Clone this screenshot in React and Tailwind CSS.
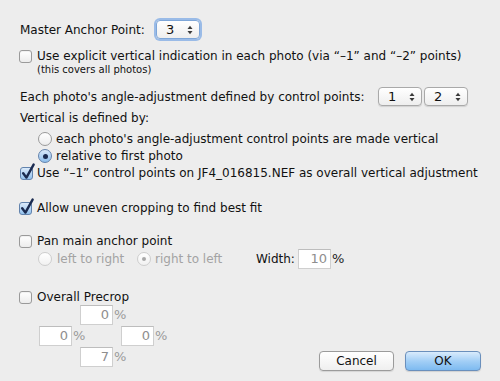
import React from "react";

function Arrows() {
  return (
    <svg width="6" height="10" viewBox="0 0 6 10" className="block">
      <path d="M0.5 4 L3 0.8 L5.5 4 Z" fill="#3a3a3a" />
      <path d="M0.5 6 L3 9.2 L5.5 6 Z" fill="#3a3a3a" />
    </svg>
  );
}

function Select({ value, focused }) {
  return (
    <div
      className={
        "w-[44px] h-[19px] rounded-[4px] flex items-center justify-between text-[13px] text-[#111] bg-linear-to-b from-white to-[#eeeeee] " +
        (focused
          ? "border border-[#7ea6d8] shadow-[0_0_0_2px_rgba(125,170,228,0.75)] pl-[9px] pr-[6px]"
          : "border border-[#a9a9a9] shadow-[0_1px_1px_rgba(0,0,0,0.12)] pl-[9px] pr-[6px]")
      }
    >
      <span className="leading-none">{value}</span>
      <Arrows />
    </div>
  );
}

function Checkbox({ checked }) {
  if (checked) {
    return (
      <span className="relative block w-[13px] h-[13px] shrink-0 rounded-[3px] border border-[#6283ad] bg-linear-to-b from-[#dbeafa] to-[#93c2ee]">
        <svg
          width="14"
          height="17"
          viewBox="0 0 14 17"
          className="absolute left-[0px] top-[-5px]"
        >
          <path
            d="M2.2 10.2 L5.4 14.6 L12.6 1.6"
            fill="none"
            stroke="#1b2b50"
            strokeWidth="2.4"
            strokeLinecap="round"
            strokeLinejoin="round"
          />
        </svg>
      </span>
    );
  }
  return (
    <span className="block w-[13px] h-[13px] shrink-0 rounded-[3px] border border-[#9a9a9a] bg-linear-to-b from-white to-[#ececec] shadow-[inset_0_1px_1px_rgba(0,0,0,0.06)]" />
  );
}

function Radio({ checked, disabled }) {
  if (disabled) {
    return (
      <span className="flex items-center justify-center w-[14px] h-[14px] shrink-0 rounded-full border border-[#cdcdcd] bg-linear-to-b from-white to-[#f1f1f1]">
        {checked && <span className="block w-[4px] h-[4px] rounded-full bg-[#a8a8a8]" />}
      </span>
    );
  }
  if (checked) {
    return (
      <span className="flex items-center justify-center w-[14px] h-[14px] shrink-0 rounded-full border border-[#6283ad] bg-linear-to-b from-[#dbeafa] to-[#8dbeec]">
        <span className="block w-[5px] h-[5px] rounded-full bg-[#1b2b50]" />
      </span>
    );
  }
  return (
    <span className="block w-[14px] h-[14px] shrink-0 rounded-full border border-[#9a9a9a] bg-linear-to-b from-white to-[#ececec]" />
  );
}

function Field({ value, pctClass }) {
  return (
    <span className="flex items-center">
      <span className="flex items-center justify-end w-[33px] h-[20px] bg-white border border-[#cfcfcf] border-t-[#bdbdbd] pr-[3px] text-[13px] text-[#8e8e8e]">
        {value}
      </span>
      <span className={"ml-[1px] text-[13px] " + pctClass}>%</span>
    </span>
  );
}

export default function App() {
  return (
    <div className="w-[500px] h-[381px] overflow-hidden bg-[#ededed] pl-[19px] pt-[20px] flex flex-col font-['DejaVu_Sans',sans-serif] text-[12px] text-[#111]">
      {/* Master Anchor Point */}
      <div className="flex items-center h-[19px]">
        <span className="ml-[1px] w-[136px]">Master Anchor Point:</span>
        <Select value="3" focused />
      </div>

      {/* explicit vertical */}
      <div className="flex items-center h-[14px] mt-[10px]">
        <Checkbox />
        <span className="ml-[5px]">
          Use explicit vertical indication in each photo (via “–1” and “–2” points)
        </span>
      </div>
      <div className="pl-[18px] h-[14px] leading-[14px] text-[10px]">
        (this covers all photos)
      </div>

      {/* angle adjustment */}
      <div className="flex items-center h-[19px] mt-[10px]">
        <span className="ml-[1px] w-[358px]">
          Each photo's angle-adjustment defined by control points:
        </span>
        <Select value="1" />
        <span className="ml-[2px]">
          <Select value="2" />
        </span>
      </div>

      <div className="flex items-center h-[16px] mt-[4px]">
        <span className="ml-[1px]">Vertical is defined by:</span>
      </div>

      <div className="flex items-center h-[16px] mt-[5px] pl-[19px]">
        <Radio />
        <span className="ml-[4px]">
          each photo's angle-adjustment control points are made vertical
        </span>
      </div>
      <div className="flex items-center h-[16px] mt-[1px] pl-[19px]">
        <Radio checked />
        <span className="ml-[4px]">relative to first photo</span>
      </div>

      <div className="flex items-center h-[16px] mt-[1px]">
        <span className="ml-[1px]">
          <Checkbox checked />
        </span>
        <span className="ml-[4px]">
          Use “–1” control points on JF4_016815.NEF as overall vertical adjustment
        </span>
      </div>

      <div className="flex items-center h-[16px] mt-[19px]">
        <Checkbox checked />
        <span className="ml-[5px]">Allow uneven cropping to find best fit</span>
      </div>

      <div className="flex items-center h-[16px] mt-[17px]">
        <Checkbox />
        <span className="ml-[5px]">Pan main anchor point</span>
      </div>

      <div className="flex items-center h-[20px] pl-[19px]">
        <span className="flex items-center w-[99px]">
          <Radio disabled />
          <span className="ml-[5px] text-[#a3a3a3]">left to right</span>
        </span>
        <span className="flex items-center w-[119px]">
          <Radio disabled checked />
          <span className="ml-[4px] text-[#a3a3a3]">right to left</span>
        </span>
        <span className="w-[42px]">Width:</span>
        <Field value="10" pctClass="text-[#222]" />
      </div>

      <div className="flex items-center h-[16px] mt-[20px]">
        <Checkbox />
        <span className="ml-[5px]">Overall Precrop</span>
      </div>

      <div className="flex">
        <div className="flex flex-col">
          <div className="ml-[61px]">
            <Field value="0" pctClass="text-[#9a9a9a]" />
          </div>
          <div className="flex mt-[1px] ml-[20px]">
            <span className="w-[82px]">
              <Field value="0" pctClass="text-[#9a9a9a]" />
            </span>
            <Field value="0" pctClass="text-[#9a9a9a]" />
          </div>
          <div className="ml-[61px] mt-[1px]">
            <Field value="7" pctClass="text-[#9a9a9a]" />
          </div>
        </div>
        <div className="flex-1 flex justify-end gap-[11px] pr-[19px] pt-[46px]">
          <button className="w-[75px] h-[20px] rounded-[4px] border border-[#9b9b9b] bg-linear-to-b from-white to-[#efefef] shadow-[0_1px_1px_rgba(0,0,0,0.1)] text-[12px] text-[#111] flex items-center justify-center">
            Cancel
          </button>
          <button className="w-[76px] h-[20px] rounded-[4px] border border-[#6a8fbc] bg-linear-to-b from-[#d9ebfc] via-[#a3cff6] to-[#7dbaf0] shadow-[0_1px_1px_rgba(0,0,0,0.12)] text-[12px] text-[#111] flex items-center justify-center">
            OK
          </button>
        </div>
      </div>
    </div>
  );
}
